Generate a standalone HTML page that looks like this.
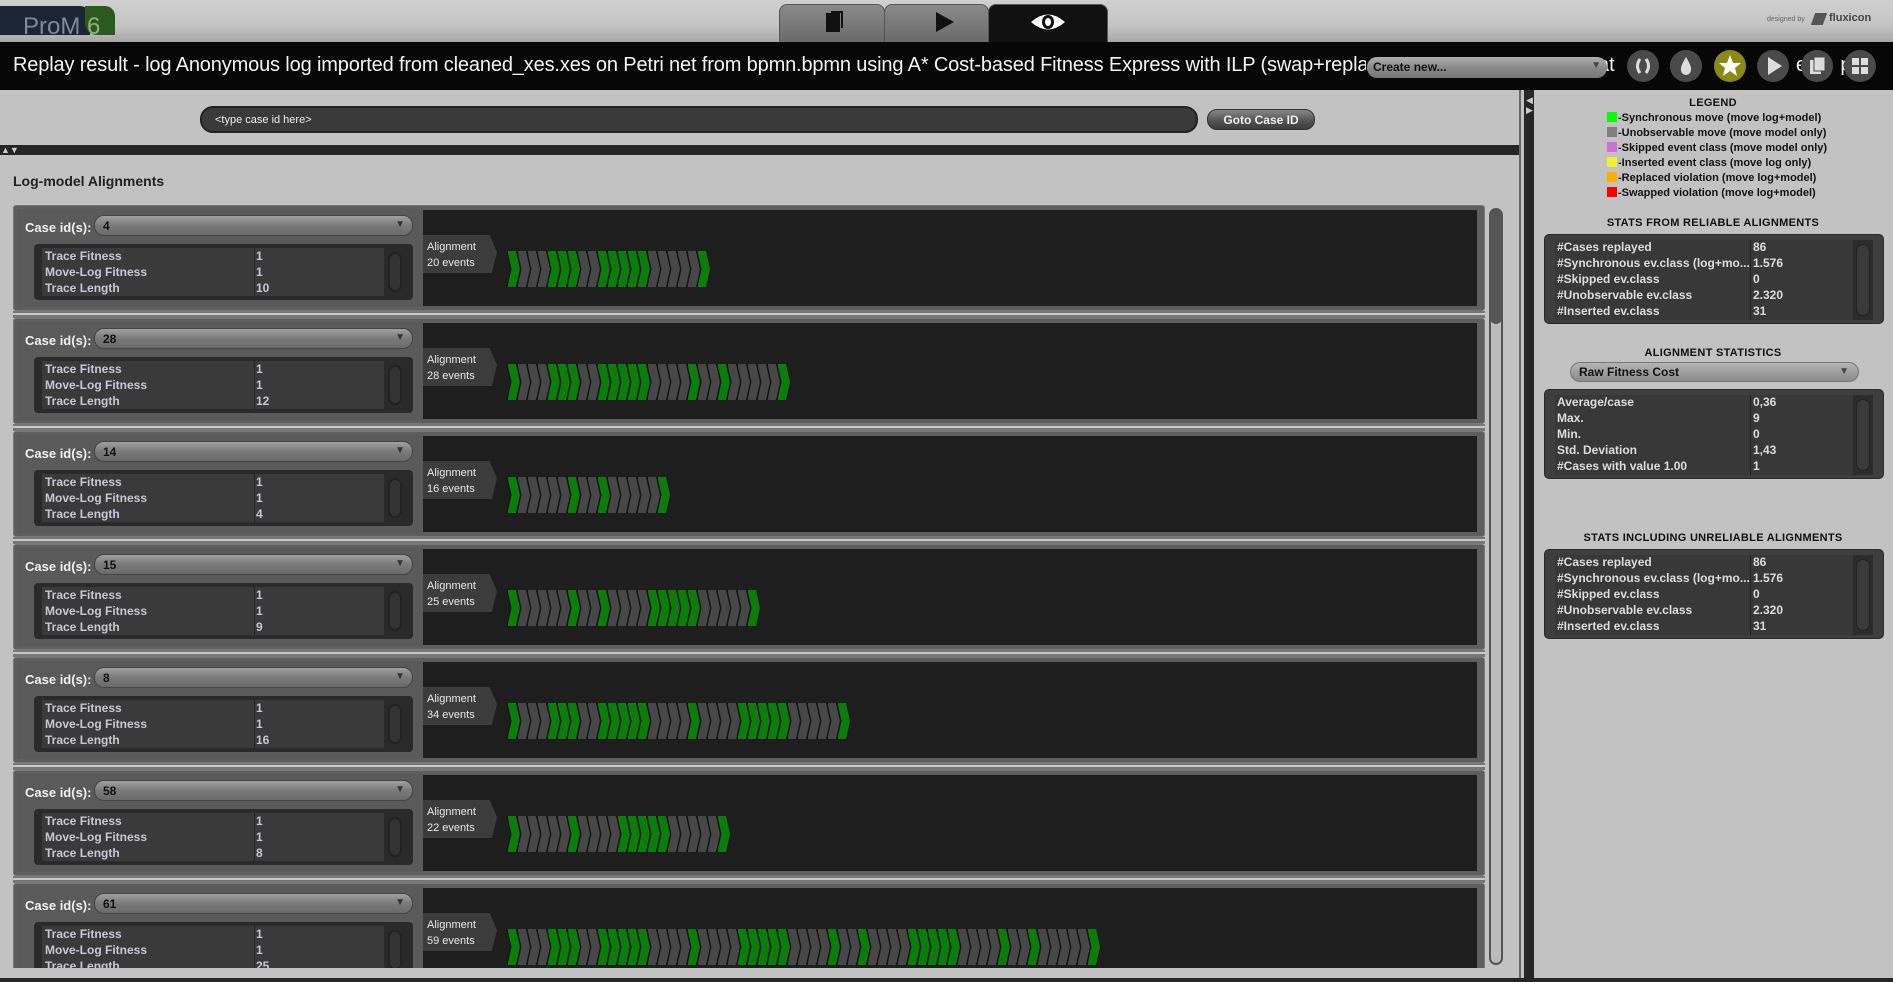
<!DOCTYPE html>
<html><head><meta charset="utf-8">
<style>
*{margin:0;padding:0;box-sizing:border-box}
html{overflow:hidden}
body{width:1893px;height:982px;overflow:hidden;background:#c2c2c2;font-family:"Liberation Sans",sans-serif;position:relative}
.abs{position:absolute}
#top{left:0;top:0;width:1893px;height:42px;background:linear-gradient(#d0d0d0,#c4c4c4 60%,#a8a8a8)}
#title{left:0;top:42px;width:1893px;height:48px;background:#070707;overflow:hidden}
.tab{top:4px;height:38px;border-radius:8px 8px 0 0;border:1px solid #555;border-bottom:none}
.circ{top:50px;width:32px;height:32px;border-radius:50%;background:#4a4a4a}
.row{left:13px;width:1472px;height:106px;background:#5e5e5e;border:1px solid #777;border-radius:3px}
.lp{position:absolute;left:3px;top:3px;width:406px;height:98px;background:#5a5a5a}
.dk{position:absolute;left:409px;top:4px;width:1054px;height:96px;background:#1e1e1e}
.cl{position:absolute;left:11px;top:14px;font:bold 13px "Liberation Sans Narrow","Liberation Sans",sans-serif;color:#f0f0f0}
.combo{position:absolute;left:80px;top:9px;width:319px;height:21px;border-radius:10px;background:linear-gradient(#a0a0a0,#7a7a7a 50%,#6a6a6a);border:1px solid #444;font:bold 12px "Liberation Sans",sans-serif;color:#111;padding:3px 0 0 8px}
.combo:after{content:"▼";position:absolute;right:7px;top:3px;font-size:10px;color:#333}
.tbl{position:absolute;left:20px;top:38px;width:379px;height:56px;background:#2a2a2a;border-radius:4px}
.tin{position:absolute;left:8px;top:4px;width:342px;height:48px;background:#3a3a3a;overflow:hidden}
.tin div{height:16px;font:bold 12px "Liberation Sans Narrow","Liberation Sans",sans-serif;color:#c8c8d4;padding-left:3px;position:relative;line-height:16px}
.tin span{position:absolute;left:214px;top:0}
.vl{position:absolute;left:212px;top:0;width:1px;height:48px;background:#222}
.sb{position:absolute;left:354px;top:8px;width:14px;height:40px;border-radius:7px;border:2px solid #222;background:#333}
.at{position:absolute;left:409px;top:29px;width:74px;height:38px;background:#3c3c3c;clip-path:polygon(0 0,90% 0,100% 45%,93% 100%,0 100%);font:11px "Liberation Sans",sans-serif;color:#e8e8e8;padding:4px 0 0 4px;line-height:16px}
.ch{position:absolute;left:492px;top:45px;height:36px;display:flex}
.ch i{display:block;position:relative;width:14px;height:36px;margin-right:-4px;background:#151515;clip-path:polygon(0 0,10px 0,14px 50%,10px 100%,0 100%,4px 50%)}
.ch i:after{content:"";position:absolute;left:1.5px;top:0;width:14px;height:36px;clip-path:polygon(0 0,10px 0,14px 50%,10px 100%,0 100%,4px 50%)}
.ch i.G:after{background:#0b7d0b}.ch i.g:after{background:#474747}
.ch i:last-child{width:16px}
.sep{left:13px;width:1472px;height:7px;background:#777}
.sep:after{content:"";position:absolute;left:0;top:2px;width:100%;height:2px;background:#c8c8c8}
.leg{left:1607px;font:bold 11px "Liberation Sans",sans-serif;color:#111;height:14px;line-height:14px}
.leg b{display:inline-block;width:10px;height:10px;margin-right:1px;vertical-align:-1px}
.hd{left:1533px;width:360px;text-align:center;font:bold 11px "Liberation Sans",sans-serif;color:#111;letter-spacing:.3px}
.box{left:1544px;width:340px;height:90px;background:#3e3e3e;border-radius:5px;border:1px solid #2a2a2a}
.bi{position:absolute;left:10px;top:5px;width:318px;height:80px;background:#383838;border-right:20px solid #2c2c2c}
.bi div{height:16px;line-height:16px;font:bold 12px "Liberation Sans",sans-serif;color:#ddd;position:relative;padding-left:2px}
.bi span{position:absolute;left:198px;top:0}
.bi:before{content:"";position:absolute;left:195px;top:0;width:1px;height:80px;background:#222}
.bsb{position:absolute;right:-17px;top:4px;width:14px;height:72px;border-radius:7px;background:#3a3a3a;border:1px solid #222}
</style></head><body>
<div id="top" class="abs">
 <div class="abs" style="left:0;top:6px;width:90px;height:29px;background:#1b2533;border-radius:0 10px 0 0"></div>
 <div class="abs" style="left:85px;top:6px;width:30px;height:29px;background:#2c5a1e;border-radius:0 10px 0 12px"></div>
 <div class="abs" style="left:23px;top:12px;font:24px 'Liberation Sans',sans-serif;color:#7e8a98;height:23px;overflow:hidden;line-height:30px">ProM <span style="color:#8fb07a">6</span></div>
 <div class="abs tab" style="left:779px;width:106px;background:linear-gradient(#8a8a8a,#6a6a6a)"></div>
 <div class="abs tab" style="left:884px;width:105px;background:linear-gradient(#8a8a8a,#6a6a6a)"></div>
 <div class="abs tab" style="left:988px;width:120px;background:#111"></div>
 <div class="abs" style="left:826px;top:13px;width:14px;height:19px;background:#111"></div>
 <div class="abs" style="left:831px;top:11px;width:12px;height:17px;border:2px solid #111;border-bottom:none;border-left:none"></div>
 <div class="abs" style="left:936px;top:12px;width:0;height:0;border-left:18px solid #111;border-top:10px solid transparent;border-bottom:10px solid transparent"></div>
 <svg class="abs" style="left:1030px;top:11px" width="36" height="22" viewBox="0 0 36 22"><path d="M1 11 Q18 -4 35 11 Q18 26 1 11Z" fill="#fff"/><ellipse cx="18" cy="11" rx="6" ry="7" fill="#111"/><ellipse cx="18" cy="11" rx="3" ry="4" fill="#fff"/></svg>
 <div class="abs" style="left:1767px;top:16px;font:7px 'Liberation Sans',sans-serif;color:#666">designed by</div>
 <div class="abs" style="left:1813px;top:13px;width:12px;height:12px;background:#555;transform:skewX(-20deg)"></div>
 <div class="abs" style="left:1829px;top:12px;font:bold 11px 'Liberation Sans',sans-serif;color:#444">fluxicon</div>
</div>
<div id="title" class="abs">
 <div class="abs" style="left:13px;top:12px;font:20px 'Liberation Sans',sans-serif;letter-spacing:-0.15px;color:#f4f4f4;white-space:nowrap">Replay result - log Anonymous log imported from cleaned_xes.xes on Petri net from bpmn.bpmn using A* Cost-based Fitness Express with ILP (swap+replacement aware) - Alignments statistics</div>
 <div class="abs" style="left:1366px;top:0;width:527px;height:48px;background:#070707"></div>
 <div class="abs" style="left:1598px;top:12px;font:20px 'Liberation Sans',sans-serif;color:#f4f4f4;white-space:nowrap">at&nbsp;&nbsp;&nbsp;&nbsp;&nbsp;s&nbsp;&nbsp;&nbsp;&nbsp;.7&nbsp;&nbsp;&nbsp;&nbsp;&nbsp;o&nbsp;&nbsp;&nbsp;&nbsp;&nbsp;s&nbsp;&nbsp;&nbsp;&nbsp;&nbsp;ea&nbsp;&nbsp;&nbsp;&nbsp;pla</div>
 <div class="abs" style="left:1367px;top:15px;width:240px;height:21px;border-radius:10px;background:linear-gradient(#b0b0b0,#8a8a8a 50%,#777);font:bold 12px 'Liberation Sans Narrow','Liberation Sans',sans-serif;color:#111;padding:3px 0 0 6px">Create new...<span style="position:absolute;right:6px;top:3px;font-size:10px;color:#444">▼</span></div>
</div>
<div class="abs circ" style="left:1627px"><svg width="32" height="32"><path d="M13 9 Q8 16 13 23 M19 9 Q24 16 19 23" stroke="#ddd" stroke-width="3" fill="none"/></svg></div>
<div class="abs circ" style="left:1670px"><svg width="32" height="32"><path d="M16 7 Q22 17 21 20 A5 5 0 0 1 11 20 Q10 17 16 7Z" fill="#ddd"/></svg></div>
<div class="abs circ" style="left:1714px;background:#8a8a14"><svg width="32" height="32"><path d="M16 5 L19 13 L27 13 L21 18 L23 26 L16 21 L9 26 L11 18 L5 13 L13 13Z" fill="#fff"/></svg></div>
<div class="abs circ" style="left:1757px"><svg width="32" height="32"><path d="M11 7 L25 16 L11 25Z" fill="#ddd"/></svg></div>
<div class="abs circ" style="left:1801px"><svg width="32" height="32"><rect x="9" y="10" width="11" height="14" fill="#ddd"/><rect x="13" y="7" width="11" height="14" fill="#ddd" stroke="#4a4a4a" stroke-width="1"/></svg></div>
<div class="abs circ" style="left:1844px"><svg width="32" height="32"><rect x="8" y="8" width="7" height="7" fill="#ddd"/><rect x="17" y="8" width="7" height="7" fill="#ddd"/><rect x="8" y="17" width="7" height="7" fill="#ddd"/><rect x="17" y="17" width="7" height="7" fill="#ddd"/></svg></div>

<div class="abs" style="left:200px;top:106px;width:998px;height:27px;border-radius:13px;background:#3a3a3a;border:2px solid #222;font:11px 'Liberation Sans',sans-serif;color:#eee;padding:6px 0 0 13px">&lt;type case id here&gt;</div>
<div class="abs" style="left:1207px;top:109px;width:108px;height:21px;border-radius:10px;background:linear-gradient(#888,#555 55%,#3c3c3c);border:1px solid #333;font:bold 12px 'Liberation Sans',sans-serif;color:#eee;text-align:center;padding-top:3px">Goto Case ID</div>
<div class="abs" style="left:0;top:145px;width:1520px;height:10px;background:#252525"></div>
<div class="abs" style="left:1px;top:145px;font:9px 'Liberation Sans',sans-serif;color:#ccc;line-height:10px">▲▼</div>
<div class="abs" style="left:13px;top:173px;font:bold 14px 'Liberation Sans',sans-serif;color:#222">Log-model Alignments</div>

<div class="abs" style="left:0;top:195px;width:1519px;height:773px;overflow:hidden">
<div style="position:absolute;left:0;top:-195px;width:1519px;height:968px">

<div class="abs row" style="top:205px"><div class="lp"></div><div class="dk"></div><div class="cl">Case id(s):</div><div class="combo">4</div><div class="tbl"><div class="tin"><div>Trace Fitness<span>1</span></div><div>Move-Log Fitness<span>1</span></div><div>Trace Length<span>10</span></div><i class="vl"></i></div><div class="sb"></div></div><div class="at">Alignment<br>20 events</div>
<div class="ch"><i class="G"></i><i class="g"></i><i class="g"></i><i class="g"></i><i class="G"></i><i class="G"></i><i class="G"></i><i class="g"></i><i class="g"></i><i class="G"></i><i class="G"></i><i class="G"></i><i class="G"></i><i class="G"></i><i class="g"></i><i class="g"></i><i class="g"></i><i class="g"></i><i class="g"></i><i class="G"></i></div></div>

<div class="abs row" style="top:318px"><div class="lp"></div><div class="dk"></div><div class="cl">Case id(s):</div><div class="combo">28</div><div class="tbl"><div class="tin"><div>Trace Fitness<span>1</span></div><div>Move-Log Fitness<span>1</span></div><div>Trace Length<span>12</span></div><i class="vl"></i></div><div class="sb"></div></div><div class="at">Alignment<br>28 events</div>
<div class="ch"><i class="G"></i><i class="g"></i><i class="g"></i><i class="g"></i><i class="G"></i><i class="G"></i><i class="G"></i><i class="g"></i><i class="g"></i><i class="G"></i><i class="G"></i><i class="G"></i><i class="G"></i><i class="G"></i><i class="g"></i><i class="g"></i><i class="g"></i><i class="g"></i><i class="G"></i><i class="g"></i><i class="g"></i><i class="G"></i><i class="g"></i><i class="g"></i><i class="g"></i><i class="g"></i><i class="g"></i><i class="G"></i></div></div>

<div class="abs row" style="top:431px"><div class="lp"></div><div class="dk"></div><div class="cl">Case id(s):</div><div class="combo">14</div><div class="tbl"><div class="tin"><div>Trace Fitness<span>1</span></div><div>Move-Log Fitness<span>1</span></div><div>Trace Length<span>4</span></div><i class="vl"></i></div><div class="sb"></div></div><div class="at">Alignment<br>16 events</div>
<div class="ch"><i class="G"></i><i class="g"></i><i class="g"></i><i class="g"></i><i class="g"></i><i class="g"></i><i class="G"></i><i class="g"></i><i class="g"></i><i class="G"></i><i class="g"></i><i class="g"></i><i class="g"></i><i class="g"></i><i class="g"></i><i class="G"></i></div></div>

<div class="abs row" style="top:544px"><div class="lp"></div><div class="dk"></div><div class="cl">Case id(s):</div><div class="combo">15</div><div class="tbl"><div class="tin"><div>Trace Fitness<span>1</span></div><div>Move-Log Fitness<span>1</span></div><div>Trace Length<span>9</span></div><i class="vl"></i></div><div class="sb"></div></div><div class="at">Alignment<br>25 events</div>
<div class="ch"><i class="G"></i><i class="g"></i><i class="g"></i><i class="g"></i><i class="g"></i><i class="g"></i><i class="G"></i><i class="g"></i><i class="g"></i><i class="G"></i><i class="g"></i><i class="g"></i><i class="g"></i><i class="g"></i><i class="G"></i><i class="G"></i><i class="G"></i><i class="G"></i><i class="G"></i><i class="g"></i><i class="g"></i><i class="g"></i><i class="g"></i><i class="g"></i><i class="G"></i></div></div>

<div class="abs row" style="top:657px"><div class="lp"></div><div class="dk"></div><div class="cl">Case id(s):</div><div class="combo">8</div><div class="tbl"><div class="tin"><div>Trace Fitness<span>1</span></div><div>Move-Log Fitness<span>1</span></div><div>Trace Length<span>16</span></div><i class="vl"></i></div><div class="sb"></div></div><div class="at">Alignment<br>34 events</div>
<div class="ch"><i class="G"></i><i class="g"></i><i class="g"></i><i class="g"></i><i class="G"></i><i class="G"></i><i class="G"></i><i class="g"></i><i class="g"></i><i class="G"></i><i class="G"></i><i class="G"></i><i class="G"></i><i class="G"></i><i class="g"></i><i class="g"></i><i class="g"></i><i class="g"></i><i class="G"></i><i class="g"></i><i class="g"></i><i class="g"></i><i class="g"></i><i class="G"></i><i class="G"></i><i class="G"></i><i class="G"></i><i class="G"></i><i class="g"></i><i class="g"></i><i class="g"></i><i class="g"></i><i class="g"></i><i class="G"></i></div></div>

<div class="abs row" style="top:770px"><div class="lp"></div><div class="dk"></div><div class="cl">Case id(s):</div><div class="combo">58</div><div class="tbl"><div class="tin"><div>Trace Fitness<span>1</span></div><div>Move-Log Fitness<span>1</span></div><div>Trace Length<span>8</span></div><i class="vl"></i></div><div class="sb"></div></div><div class="at">Alignment<br>22 events</div>
<div class="ch"><i class="G"></i><i class="g"></i><i class="g"></i><i class="g"></i><i class="g"></i><i class="g"></i><i class="G"></i><i class="g"></i><i class="g"></i><i class="g"></i><i class="g"></i><i class="G"></i><i class="G"></i><i class="G"></i><i class="G"></i><i class="G"></i><i class="g"></i><i class="g"></i><i class="g"></i><i class="g"></i><i class="g"></i><i class="G"></i></div></div>

<div class="abs row" style="top:883px"><div class="lp"></div><div class="dk"></div><div class="cl">Case id(s):</div><div class="combo">61</div><div class="tbl"><div class="tin"><div>Trace Fitness<span>1</span></div><div>Move-Log Fitness<span>1</span></div><div>Trace Length<span>25</span></div><i class="vl"></i></div><div class="sb"></div></div><div class="at">Alignment<br>59 events</div>
<div class="ch"><i class="G"></i><i class="g"></i><i class="g"></i><i class="g"></i><i class="G"></i><i class="G"></i><i class="G"></i><i class="g"></i><i class="g"></i><i class="G"></i><i class="G"></i><i class="G"></i><i class="G"></i><i class="G"></i><i class="g"></i><i class="g"></i><i class="g"></i><i class="g"></i><i class="G"></i><i class="g"></i><i class="g"></i><i class="g"></i><i class="g"></i><i class="G"></i><i class="G"></i><i class="G"></i><i class="G"></i><i class="G"></i><i class="g"></i><i class="g"></i><i class="g"></i><i class="g"></i><i class="G"></i><i class="g"></i><i class="g"></i><i class="G"></i><i class="g"></i><i class="g"></i><i class="g"></i><i class="g"></i><i class="G"></i><i class="G"></i><i class="G"></i><i class="G"></i><i class="G"></i><i class="g"></i><i class="g"></i><i class="g"></i><i class="g"></i><i class="G"></i><i class="g"></i><i class="g"></i><i class="G"></i><i class="g"></i><i class="g"></i><i class="g"></i><i class="g"></i><i class="g"></i><i class="G"></i></div></div>

<div class="abs sep" style="top:311px"></div>
<div class="abs sep" style="top:424px"></div>
<div class="abs sep" style="top:537px"></div>
<div class="abs sep" style="top:650px"></div>
<div class="abs sep" style="top:763px"></div>
<div class="abs sep" style="top:876px"></div>
<div class="abs" style="left:1489px;top:208px;width:14px;height:757px;border-radius:7px;border:2px solid #555;background:#bbb"></div>
<div class="abs" style="left:1490px;top:209px;width:12px;height:115px;border-radius:6px;background:#555"></div>
</div></div>
<div class="abs" style="left:0;top:978px;width:1893px;height:4px;background:#252525"></div>

<div class="abs" style="left:1519px;top:90px;width:2px;height:888px;background:#666"></div>
<div class="abs" style="left:1524px;top:90px;width:10px;height:888px;background:#262626"></div>
<div class="abs" style="left:1526px;top:95px;font:9px 'Liberation Sans',sans-serif;color:#ccc;line-height:10px">◀<br>▶</div>

<div class="abs hd" style="top:97px">LEGEND</div>
<div class="abs leg" style="top:111px"><b style="background:#0f0"></b>-Synchronous move (move log+model)</div>
<div class="abs leg" style="top:126px"><b style="background:#808080"></b>-Unobservable move (move model only)</div>
<div class="abs leg" style="top:141px"><b style="background:#d070d0"></b>-Skipped event class (move model only)</div>
<div class="abs leg" style="top:156px"><b style="background:#f0f030"></b>-Inserted event class (move log only)</div>
<div class="abs leg" style="top:171px"><b style="background:#f8b000"></b>-Replaced violation (move log+model)</div>
<div class="abs leg" style="top:186px"><b style="background:#f00"></b>-Swapped violation (move log+model)</div>
<div class="abs hd" style="top:217px">STATS FROM RELIABLE ALIGNMENTS</div>
<div class="abs box" style="top:234px"><div class="bi"><div>#Cases replayed<span>86</span></div><div>#Synchronous ev.class (log+mo...<span>1.576</span></div><div>#Skipped ev.class<span>0</span></div><div>#Unobservable ev.class<span>2.320</span></div><div>#Inserted ev.class<span>31</span></div><i class="bsb"></i></div></div>
<div class="abs hd" style="top:347px">ALIGNMENT STATISTICS</div>
<div class="abs" style="left:1570px;top:362px;width:289px;height:20px;border-radius:10px;background:linear-gradient(#b4b4b4,#8a8a8a);border:1px solid #777;font:bold 12px 'Liberation Sans',sans-serif;color:#111;padding:2px 0 0 8px">Raw Fitness Cost<span style="position:absolute;right:9px;top:3px;font-size:10px;color:#444">▼</span></div>
<div class="abs box" style="top:389px"><div class="bi"><div>Average/case<span>0,36</span></div><div>Max.<span>9</span></div><div>Min.<span>0</span></div><div>Std. Deviation<span>1,43</span></div><div>#Cases with value 1.00<span>1</span></div><i class="bsb"></i></div></div>
<div class="abs hd" style="top:532px">STATS INCLUDING UNRELIABLE ALIGNMENTS</div>
<div class="abs box" style="top:549px"><div class="bi"><div>#Cases replayed<span>86</span></div><div>#Synchronous ev.class (log+mo...<span>1.576</span></div><div>#Skipped ev.class<span>0</span></div><div>#Unobservable ev.class<span>2.320</span></div><div>#Inserted ev.class<span>31</span></div><i class="bsb"></i></div></div>
</body></html>
